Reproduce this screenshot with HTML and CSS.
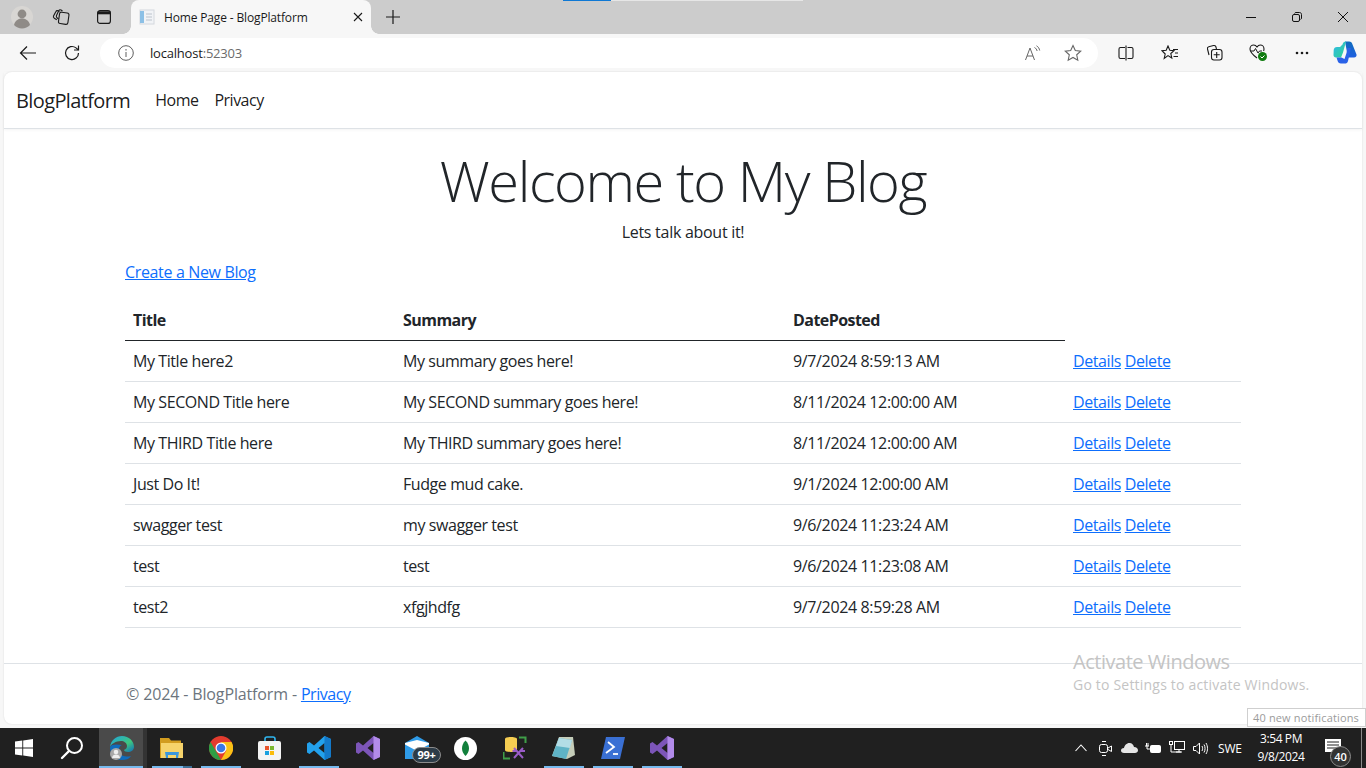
FILE: index.html
```html
<!DOCTYPE html>
<html lang="en">
<head>
<meta charset="utf-8">
<title>Home Page - BlogPlatform</title>
<link rel="stylesheet" href="styles.css">
</head>
<body>
<div class="screen">
  <header class="tabstrip">
    <div class="strip-left">
      <div class="avatar"><svg width="24" height="24" viewBox="0 0 24 24"><circle cx="12" cy="12" r="11" fill="#d8d6d3"/><circle cx="12" cy="9" r="4.400" fill="#8f8b87"/><path d="M4 20c1-5 5-6.500 8-6.500s7 1.500 8 6.500a11 11 0 0 1-16 0z" fill="#8f8b87"/></svg></div>
      <span class="strip-icon"><svg width="18" height="18" viewBox="0 0 18 18" fill="none" stroke="#1a1a1a" stroke-width="1.100"><rect x="7" y="4.500" width="9.500" height="11.500" rx="2" transform="rotate(8 11.700 10)"/><path d="M7.500 3.500 6 2.800c-1-.4-1.800 0-2.200.9L1.500 8c-.4 1 0 1.700.8 2.200l2.500 1.600"/><path d="M10.500 3 9 2c-1-.5-1.800-.2-2.300.7L4.500 7.500c-.4 1-.2 1.700.5 2.300l1.500 1.200"/></svg></span>
      <span class="strip-icon"><svg width="16" height="16" viewBox="0 0 16 16" fill="none" stroke="#1a1a1a" stroke-width="1.200"><rect x="1.600" y="1.600" width="12.800" height="12.800" rx="2.500"/><path d="M1.600 3.800h12.800" stroke-width="3"/></svg></span>
    </div>
    <div class="tab">
      <svg class="favicon" width="16" height="16" viewBox="0 0 16 16"><rect x="1" y="1" width="14" height="14" fill="#f1f3f6" stroke="#d4d8de"/><rect x="1" y="2" width="4" height="12" fill="#8cc0e6"/><path d="M7 5h6M7 8h6M7 11h6" stroke="#bcc3cc"/></svg>
      <span class="tab-title">Home Page - BlogPlatform</span>
      <svg class="tab-close" width="10" height="10" viewBox="0 0 10 10" stroke="#1a1a1a" stroke-width="1.100"><path d="M1 1l8 8M9 1l-8 8"/></svg>
    </div>
    <span class="new-tab"><svg width="14" height="14" viewBox="0 0 14 14" stroke="#1a1a1a" stroke-width="1.200"><path d="M7 0v14M0 7h14"/></svg></span>
    <div class="load-marks"><i class="mark-blue"></i><i class="mark-white"></i></div>
    <div class="win-controls">
      <svg width="10" height="10" viewBox="0 0 10 10" stroke="#111" stroke-width="1"><path d="M0 5.500h10"/></svg>
      <svg width="10" height="10" viewBox="0 0 10 10" fill="none" stroke="#111" stroke-width="1"><rect x=".5" y="2.500" width="7" height="7" rx="1.500"/><path d="M2.500 1.500c.3-.7.800-1 1.500-1h3.500c1.200 0 2 .8 2 2V6c0 .7-.3 1.200-1 1.500"/></svg>
      <svg width="10" height="10" viewBox="0 0 10 10" stroke="#111" stroke-width="1"><path d="M0 0l10 10M10 0L0 10"/></svg>
    </div>
  </header>

  <div class="toolbar">
    <span class="tool-btn"><svg width="18" height="16" viewBox="0 0 18 16" fill="none" stroke="#1a1a1a" stroke-width="1.200"><path d="M17 8H1.500M8 1.500 1.500 8 8 14.500"/></svg></span>
    <span class="tool-btn"><svg width="18" height="18" viewBox="0 0 18 18" fill="none" stroke="#1a1a1a" stroke-width="1.200"><path d="M15.500 9A6.500 6.500 0 1 1 13 3.900L15.500 6"/><path d="M15.500 1.500V6H11"/></svg></span>
    <div class="address">
      <svg class="info" width="16" height="16" viewBox="0 0 16 16" fill="none" stroke="#5f5f5f"><circle cx="8" cy="8" r="7.300"/><path d="M8 7v5M8 4v1.600"/></svg>
      <span class="url">localhost<span class="port">:52303</span></span>
      <span class="addr-spacer"></span>
      <svg class="addr-ic" width="16" height="16" viewBox="0 0 16 16" fill="none" stroke="#666"><path d="M.5 15 5 3l4.500 12M2 11h6"/><path d="M9.500 2.500c1.500.8 2.300 2 2.600 3.500M11.500 .8c1.800 1 2.800 2.700 3.200 4.700"/></svg>
      <svg class="addr-ic" width="18" height="18" viewBox="0 0 18 18" fill="none" stroke="#666" stroke-width="1.100"><path d="M9 1.500l2.300 5 5.400.6-4 3.700 1.100 5.400L9 13.500l-4.800 2.700 1.100-5.400-4-3.700 5.400-.6z"/></svg>
    </div>
    <div class="tool-right">
      <span class="tool-ic"><svg width="16" height="16" viewBox="0 0 16 16" fill="none" stroke="#1a1a1a" stroke-width="1.100"><path d="M7 2.500H2.500c-1 0-1.500.5-1.500 1.500v8c0 1 .5 1.500 1.500 1.500H7M9.500 2.500h4c1 0 1.500.5 1.500 1.500v8c0 1-.5 1.500-1.500 1.500h-4M8 .5v15"/></svg></span>
      <span class="tool-ic"><svg width="18" height="16" viewBox="0 0 18 16" fill="none" stroke="#1a1a1a" stroke-width="1.100"><path d="M7 1l1.800 4.300 4.200.4-3.200 2.800 1 4.500L7 10.600l-3.800 2.900 1-4.500L1 5.700l4.200-.4zM12 4.500h5M14 8h3M12.500 11.500H17"/></svg></span>
      <span class="tool-ic"><svg width="17" height="17" viewBox="0 0 17 17" fill="none" stroke="#1a1a1a" stroke-width="1.100"><path d="M3 11 1.500 5c-.3-1.200.2-2 1.300-2.300L7.500 1.500c1-.2 1.800 0 2.300 1L10.500 5"/><rect x="5.500" y="5.500" width="10.500" height="10.500" rx="2.500"/><path d="M10.700 8v6M7.700 10.800h6"/></svg></span>
      <span class="tool-ic"><svg width="19" height="19" viewBox="0 0 19 19"><path d="M8 15C4 12 1 9.500 1 6c0-2.200 1.600-4 3.700-4C6 2 7.200 2.800 8 4c.8-1.200 2-2 3.300-2C13.400 2 15 3.800 15 6c0 .7-.2 1.400-.4 2" fill="none" stroke="#1a1a1a" stroke-width="1.100"/><path d="M2 8h3l1.500-2.500L9 10l1.500-2H13" fill="none" stroke="#1a1a1a"/><circle cx="13.500" cy="13.500" r="4.500" fill="#107c10"/><path d="M11.500 13.500l1.500 1.500 2.500-2.500" fill="none" stroke="#fff"/></svg></span>
      <span class="tool-ic"><svg width="14" height="4" viewBox="0 0 14 4" fill="#1a1a1a"><circle cx="2" cy="2" r="1.300"/><circle cx="7" cy="2" r="1.300"/><circle cx="12" cy="2" r="1.300"/></svg></span>
      <span class="tool-ic last"><svg width="24" height="23" viewBox="0 0 24 23"><defs><linearGradient id="cpa" x1="0" y1="0" x2="1" y2="1"><stop offset="0" stop-color="#2fb6f0"/><stop offset="1" stop-color="#30d58c"/></linearGradient><linearGradient id="cpb" x1="0" y1="0" x2="0" y2="1"><stop offset="0" stop-color="#0f6cbd"/><stop offset="1" stop-color="#1f5fe0"/></linearGradient></defs><path d="M12 .500h4c2 0 3 1 3.500 3l4 10c.4 1.500-.5 3-2.500 3h-6z" fill="url(#cpb)"/><path d="M13 .500c-2 0-3 1-3.500 3L7 6H4C2 6 1 7 .7 9L.5 14c0 1.500 1 2.500 2.500 2.500h5l2-5 3-11z" fill="url(#cpa)"/><path d="M12 22.500H8c-2 0-3-1-3.500-3l-1-3h5l3 1.500 2-6 1-5h3.500l-3 13c-.5 2-1.500 2.500-3.500 2.500z" fill="#2a62e8"/></svg></span>
    </div>
  </div>

  <main class="viewport">
    <nav class="navbar">
      <a class="brand">BlogPlatform</a>
      <a class="nav-link">Home</a>
      <a class="nav-link">Privacy</a>
    </nav>
    <div class="content">
      <div class="hero">
        <h1>Welcome to My Blog</h1>
        <p>Lets talk about it!</p>
      </div>
      <p class="create"><a href="#">Create a New Blog</a></p>
      <table class="blogs">
        <thead>
          <tr><th class="c1">Title</th><th class="c2">Summary</th><th class="c3">DatePosted</th><th class="c4 blank"></th></tr>
        </thead>
        <tbody>
          <tr><td>My Title here2</td><td>My summary goes here!</td><td class="date">9/7/2024 8:59:13 AM</td><td><a href="#">Details</a> <a href="#">Delete</a></td></tr>
          <tr><td>My SECOND Title here</td><td>My SECOND summary goes here!</td><td class="date">8/11/2024 12:00:00 AM</td><td><a href="#">Details</a> <a href="#">Delete</a></td></tr>
          <tr><td>My THIRD Title here</td><td>My THIRD summary goes here!</td><td class="date">8/11/2024 12:00:00 AM</td><td><a href="#">Details</a> <a href="#">Delete</a></td></tr>
          <tr><td>Just Do It!</td><td>Fudge mud cake.</td><td class="date">9/1/2024 12:00:00 AM</td><td><a href="#">Details</a> <a href="#">Delete</a></td></tr>
          <tr><td>swagger test</td><td>my swagger test</td><td class="date">9/6/2024 11:23:24 AM</td><td><a href="#">Details</a> <a href="#">Delete</a></td></tr>
          <tr><td>test</td><td>test</td><td class="date">9/6/2024 11:23:08 AM</td><td><a href="#">Details</a> <a href="#">Delete</a></td></tr>
          <tr><td>test2</td><td>xfgjhdfg</td><td class="date">9/7/2024 8:59:28 AM</td><td><a href="#">Details</a> <a href="#">Delete</a></td></tr>
        </tbody>
      </table>
    </div>
    <footer class="footer">© 2024 - BlogPlatform - <a href="#">Privacy</a></footer>
    <div class="activate">
      <div class="act-title">Activate Windows</div>
      <div class="act-sub">Go to Settings to activate Windows.</div>
    </div>
    <div class="notif-tip">40 new notifications</div>
  </main>

  <div class="taskbar">
    <span class="tb-item start"><svg width="18" height="18" viewBox="0 0 18 18" fill="#fff"><path d="M0 2.600 7.300 1.600v7H0zM8.200 1.500 18 0v8.600H8.200zM0 9.500h7.300v7L0 15.500zM8.200 9.500H18V18L8.200 16.600z"/></svg></span>
    <span class="tb-item search"><svg width="24" height="24" viewBox="0 0 24 24" fill="none" stroke="#fff" stroke-width="2"><circle cx="14.500" cy="9.500" r="7.500"/><path d="M9 15 2 22" stroke-linecap="round" stroke-width="2.400"/></svg></span>
    <span class="tb-item edge"><svg width="26" height="26" viewBox="0 0 26 26"><defs><linearGradient id="ed" x1="0" y1="0" x2="1" y2="1"><stop offset="0" stop-color="#1fa4e0"/><stop offset=".6" stop-color="#3ec77e"/><stop offset="1" stop-color="#0f6cbd"/></linearGradient></defs><path d="M1 12C2 5 7 1 13 1c7 0 12 5 12 11 0 3-3 5-6 5-2 0-4-1-4-2 2-1 3-2 3-4 0-3-3-5-6-5-5 0-10 3-11 6z" fill="url(#ed)"/><path d="M1 12c0 7 5 13 12 13 4 0 7-1 9-4-4 1-9 1-11-3-2-3-1-7 2-8C8 9 2 9 1 12z" fill="#0f6cbd"/><circle cx="7" cy="19" r="6" fill="#a8a8a8"/><circle cx="7" cy="17" r="2.300" fill="#eee"/><path d="M3 23c.5-3 2-3.500 4-3.500s3.500.5 4 3.500z" fill="#eee"/></svg></span>
    <span class="tb-item on double"><svg width="24" height="22" viewBox="0 0 24 22"><path d="M0 1h9l2 2.500h10V21H0z" fill="#d29c1f"/><path d="M1 6h22v15H1z" fill="#f6d36b"/><path d="M5 15h14l-1 6H6z" fill="#3a96dd"/><path d="M8 18h8v3H8z" fill="#f6d36b"/></svg></span>
    <span class="tb-item on"><svg width="24" height="24" viewBox="0 0 24 24"><circle cx="12" cy="12" r="12" fill="#e33b2e"/><path d="M12 6h10.500A12 12 0 0 1 12 24l5.300-9.500z" fill="#fbc116"/><path d="M1.600 6 6.800 15 12 24A12 12 0 0 1 1.600 6z" fill="#2f9e44"/><circle cx="12" cy="12" r="5.500" fill="#fff"/><circle cx="12" cy="12" r="4.300" fill="#3b78e7"/></svg></span>
    <span class="tb-item"><svg width="24" height="24" viewBox="0 0 24 24"><path d="M7 6V3c0-1 1-2 2-2h6c1 0 2 1 2 2v3" fill="none" stroke="#2fb6f0" stroke-width="1.600"/><rect y="5" width="23" height="19" rx="2" fill="#f4f4f4"/><rect x="7" y="10" width="4" height="4" fill="#e8542c"/><rect x="12" y="10" width="4" height="4" fill="#7cb82f"/><rect x="7" y="15" width="4" height="4" fill="#1aa1e0"/><rect x="12" y="15" width="4" height="4" fill="#fbbc09"/></svg></span>
    <span class="tb-item on"><svg width="24" height="24" viewBox="0 0 24 24"><path d="M17.500 0 24 3v18l-6.500 3L7 14.500 2.500 18 0 16.500v-9L2.500 6 7 9.500zM17.500 7l-6 5 6 5z" fill="#23a1ec"/><path d="M17.500 0 24 3v18l-6.500 3z" fill="#1379c9"/></svg></span>
    <span class="tb-item"><svg width="24" height="24" viewBox="0 0 24 24"><path d="M17.500 0 24 3v18l-6.500 3L7 14.500 2.500 18 0 16.500v-9L2.500 6 7 9.500zM17.500 7l-6 5 6 5z" fill="#7c55b8"/><path d="M17.500 0 24 3v18l-6.500 3z" fill="#b28bea"/></svg></span>
    <span class="tb-item mail"><svg width="24" height="23" viewBox="0 0 24 23"><path d="M0 7 12 0l12 7v16H0z" fill="#2f9be8"/><path d="M0 8.500 12 15l12-6.500V7L12 4 0 7z" fill="#fff"/></svg><span class="badge99">99+</span></span>
    <span class="tb-item"><svg width="23" height="23" viewBox="0 0 23 23"><circle cx="11.500" cy="11.500" r="11.500" fill="#fff"/><path d="M11.500 3.500c2.300 2.400 3.500 5 3.500 8s-1.700 5.500-3.500 7.500c-1.800-2-3.500-4.500-3.500-7.500s1.200-5.600 3.500-8z" fill="#12803c"/></svg></span>
    <span class="tb-item"><svg width="24" height="24" viewBox="0 0 24 24" fill="none"><path d="M2 3c0-1.500 2.700-2 5.500-2S14 1.500 14 3v11c0 1.500-3.700 2-6.500 2S2 15.500 2 14z" fill="#f5cd52"/><path d="M16 1.500h6.500V7M.5 16v6.500H7" stroke="#3f9e48" stroke-width="2"/><path d="M11 12l9 10M20 12l-9 10M9.500 15h5M17 15h5" stroke="#9a5cc7" stroke-width="2"/></svg></span>
    <span class="tb-item on"><svg width="24" height="24" viewBox="0 0 24 24"><path d="M7 1h14l2 18-8 4-15-3z" fill="#c5cdb9"/><path d="M7 2 0 20l14 3 6-19z" fill="#5fb3c6"/><path d="M7 2 4 10l14 2 2-8z" fill="#b3dde6"/></svg></span>
    <span class="tb-item on"><svg width="24" height="22" viewBox="0 0 24 22"><path d="M5 0h19l-5 22H0z" fill="#3a70d4"/><path d="M7 5l6 5-8 6" fill="none" stroke="#fff" stroke-width="1.800"/><path d="M12 17h5" stroke="#fff" stroke-width="1.800"/></svg></span>
    <span class="tb-item on"><svg width="24" height="24" viewBox="0 0 24 24"><path d="M17.500 0 24 3v18l-6.500 3L7 14.500 2.500 18 0 16.500v-9L2.500 6 7 9.500zM17.500 7l-6 5 6 5z" fill="#7c55b8"/><path d="M17.500 0 24 3v18l-6.500 3z" fill="#b28bea"/></svg></span>
    <span class="tb-spacer"></span>
    <div class="tray">
      <span class="tray-cell"><svg width="12" height="8" viewBox="0 0 12 8" fill="none" stroke="#fff" stroke-width="1.100"><path d="M.5 7 6 1l5.500 6"/></svg></span>
      <span class="tray-cell"><svg width="13" height="17" viewBox="0 0 13 17" fill="none" stroke="#fff"><rect x=".5" y="4.500" width="8" height="8" rx="2"/><path d="M9 8l3.500-2v5.500L9 9.500M3 1.500h4M3 15.500h4"/></svg></span>
      <span class="tray-cell"><svg width="17" height="10" viewBox="0 0 17 10" fill="#e6e6e6"><path d="M3 10C1 10 0 8.800 0 7.500S1 5 3 5c.5-2.500 2.500-5 5.500-5C11 0 12.500 1.800 13 4c2.500 0 4 1.500 4 3.200S15.500 10 14 10z"/></svg></span>
      <span class="tray-cell"><svg width="16" height="12" viewBox="0 0 16 12" fill="none" stroke="#fff"><rect x="5.500" y="3.500" width="10" height="7" rx="1" fill="#fff"/><path d="M0 4h4M1.500 1v3M3 1v3M2 4v3h3"/></svg></span>
      <span class="tray-cell"><svg width="16" height="14" viewBox="0 0 16 14" fill="none" stroke="#fff"><rect x="5.500" y=".5" width="10" height="8"/><rect x=".5" y=".5" width="3" height="3"/><path d="M2 4v7h10M7 11h6M10 9v2"/></svg></span>
      <span class="tray-cell"><svg width="16" height="13" viewBox="0 0 16 13" fill="none" stroke="#fff"><path d="M.5 4.500h2.500L6.500 1v11L3 8.500H.5zM9 4c.8 1.500.8 3.500 0 5M11 2.500c1.400 2.500 1.400 5.500 0 8M13 1c2 3.500 2 7.500 0 11"/></svg></span>
      <span class="lang">SWE</span>
    </div>
    <div class="clock"><span>3:54 PM</span><span>9/8/2024</span></div>
    <span class="notif"><svg width="16" height="13" viewBox="0 0 16 13"><rect width="16" height="13" fill="#fff"/><path d="M2 3h12M2 6h12M2 9h9" stroke="#202020"/></svg><span class="badge40">40</span></span>
  </div>
</div>
</body>
</html>
```
FILE: styles.css
```css
* { box-sizing: border-box; }
html, body { margin: 0; padding: 0; height: 100%; overflow: hidden; }
body { font-family: "Open Sans", "Liberation Sans", sans-serif; color: #212529; background: #f7f7f7; }
.screen { width: 1366px; height: 768px; display: flex; flex-direction: column; }

.tabstrip { height: 34px; background: #cccccc; display: flex; position: relative; flex: none; }
.strip-left { width: 131px; display: flex; align-items: center; padding-left: 10px; }
.avatar { width: 24px; height: 24px; }
.strip-icon { display: flex; justify-content: center; width: 24px; margin-left: 15px; }
.strip-icon + .strip-icon { margin-left: 19px; }
.tab { width: 240px; height: 34px; background: #f7f7f7; border-radius: 8px 8px 0 0; display: flex; align-items: center; padding-left: 8px; font-size: 12px; color: #1a1a1a; position: relative; }
.tab::before, .tab::after { content: ""; position: absolute; bottom: 0; width: 8px; height: 8px; }
.tab::before { left: -8px; background: radial-gradient(circle at 0 0, #cccccc 7.5px, #f7f7f7 8px); }
.tab::after { right: -8px; background: radial-gradient(circle at 100% 0, #cccccc 7.5px, #f7f7f7 8px); }
.tab-title { margin-left: 9px; width: 187px; letter-spacing: -0.15px; white-space: nowrap; }
.tab-close { margin-left: 2px; }
.new-tab { display: flex; align-items: center; margin-left: 15px; }
.load-marks { position: absolute; top: 0; left: 563px; display: flex; height: 1px; }
.mark-blue { width: 48px; background: #0f78d4; }
.mark-white { width: 192px; background: #e6e6e6; }
.win-controls { margin-left: auto; display: flex; align-items: center; gap: 36px; padding-right: 18px; }

.toolbar { height: 38px; background: #f7f7f7; display: flex; align-items: center; flex: none; padding-bottom: 1px; }
.tool-btn { width: 44px; flex: none; display: flex; justify-content: center; padding-left: 12px; }
.address { margin-left: 12px; width: 998px; height: 30px; background: #fff; border-radius: 15px; display: flex; align-items: center; padding-left: 18px; font-size: 13px; color: #1a1a1a; flex: none; }
.info { flex: none; }
.url { margin-left: 16px; letter-spacing: -0.2px; }
.port { color: #6b6b6b; }
.addr-spacer { flex: 1; }
.addr-ic { margin-right: 23px; }
.addr-ic:last-child { margin-right: 16px; }
.tool-right { display: flex; align-items: center; margin-left: 6px; flex: 1; }
.tool-ic { width: 44px; display: flex; justify-content: center; flex: none; }
.tool-ic.last { width: 42px; }

.viewport { flex: 1; margin: 0 4px 4px 4px; background: #fff; border-radius: 8px; position: relative; display: flex; flex-direction: column; box-shadow: 0 0 2px rgba(0,0,0,.12); }
.navbar { height: 57px; border-bottom: 1px solid #dee2e6; box-shadow: 0 1px 3px rgba(0,0,0,.05); display: flex; align-items: center; padding: 0 12px; flex: none; font-size: 16px; }
.brand { font-size: 20px; margin-right: 17px; color: rgba(0,0,0,.9); letter-spacing: -0.62px; }
.nav-link { padding: 0 8px; color: rgba(0,0,0,.9); letter-spacing: -0.5px; }

.content { width: 1140px; margin: 0 auto; padding: 0 12px; flex: none; }
.hero { text-align: center; padding-top: 18px; }
.hero h1 { margin: 0 0 6px; font-size: 56px; font-weight: 300; line-height: 1.2; letter-spacing: -1.42px; }
.hero p { margin: 0; font-size: 16px; line-height: 24px; letter-spacing: -0.28px; }
.create { margin: 16px 0; line-height: 24px; font-size: 16px; letter-spacing: -0.35px; }
a { color: #0d6efd; text-decoration: underline; }
.navbar a { text-decoration: none; }
.blogs { border-collapse: collapse; width: 1116px; table-layout: fixed; font-size: 16px; letter-spacing: -0.42px; }
.blogs th { text-align: left; font-weight: 700; padding: 7px 8px; height: 40px; border-bottom: 1px solid #212529; letter-spacing: -0.55px; }
.blogs th.blank { border-bottom-color: transparent; }
.blogs td { padding: 8px; height: 41px; border-bottom: 1px solid #dee2e6; white-space: nowrap; line-height: 24px; }
.blogs td.date { letter-spacing: -0.36px; }
.c1 { width: 270px; } .c2 { width: 390px; } .c3 { width: 280px; } .c4 { width: 176px; }

.footer { margin-top: 35px; border-top: 1px solid #dee2e6; padding-left: 122px; padding-top: 18px; font-size: 16px; line-height: 24px; color: #6c757d; letter-spacing: -0.14px; flex: 1; }
.footer a { letter-spacing: -0.45px; }

.activate { position: absolute; left: 1069px; top: 579px; color: #c4c4c4; }
.act-title { font-size: 20px; line-height: 22px; letter-spacing: -0.47px; white-space: nowrap; }
.act-sub { font-size: 14px; line-height: 22px; margin-top: 1px; letter-spacing: 0.2px; white-space: nowrap; }
.notif-tip { position: absolute; right: -4px; top: 636px; width: 119px; height: 19px; background: #fff; border: 1px solid #cfcfcf; font-size: 11px; line-height: 17px; padding-left: 5px; color: #9b9b9b; white-space: nowrap; letter-spacing: 0.15px; }

.taskbar { height: 40px; background: #202020; display: flex; align-items: center; flex: none; }
.tb-item { width: 49px; height: 40px; display: flex; align-items: center; justify-content: center; position: relative; flex: none; }
.tb-item.start { width: 48px; }
.tb-item.search { width: 51px; padding-right: 3px; }
.tb-item.on::after { content: ""; position: absolute; left: 5px; right: 4px; bottom: 0; height: 2px; background: #76b9ed; }
.tb-item.edge { width: 48px; padding-right: 3px; background: linear-gradient(90deg, #4a4a4a 44px, #333 44px); }
.tb-item.edge::after { content: ""; position: absolute; left: 0; right: 4px; bottom: 0; height: 2px; background: #76b9ed; }
.tb-item.double::after { left: 5px; right: 13px; }
.tb-item.double::before { content: ""; position: absolute; left: 36px; right: 4px; bottom: 0; height: 2px; background: #3d6f96; }
.mail svg { margin-top: -2px; }
.badge99 { position: absolute; left: 20px; top: 19px; width: 29px; height: 16px; border-radius: 8px; background: #2d3c48; border: 1px solid #8c8c8c; color: #fff; font-size: 11px; font-weight: 700; line-height: 14px; text-align: center; letter-spacing: -0.3px; }
.tb-spacer { flex: 1; }
.tray { display: flex; align-items: center; color: #fff; }
.tray-cell { width: 24px; display: flex; justify-content: center; align-items: center; }
.lang { font-size: 12px; margin-left: 5px; width: 25px; letter-spacing: -0.2px; }
.clock { display: flex; flex-direction: column; align-items: center; color: #fff; font-size: 12px; line-height: 18px; margin-left: 8px; width: 60px; white-space: nowrap; letter-spacing: -0.4px; }
.notif { position: relative; width: 51px; height: 40px; display: flex; align-items: center; justify-content: center; margin-right: 4px; padding-right: 6px; padding-bottom: 6px; border-right: 1px solid #8a8a8a; }
.badge40 { position: absolute; left: 19px; top: 18px; width: 21px; height: 21px; border-radius: 50%; background: #333; border: 1px solid #8c8c8c; color: #fff; font-size: 11px; font-weight: 600; line-height: 19px; text-align: center; }
```
